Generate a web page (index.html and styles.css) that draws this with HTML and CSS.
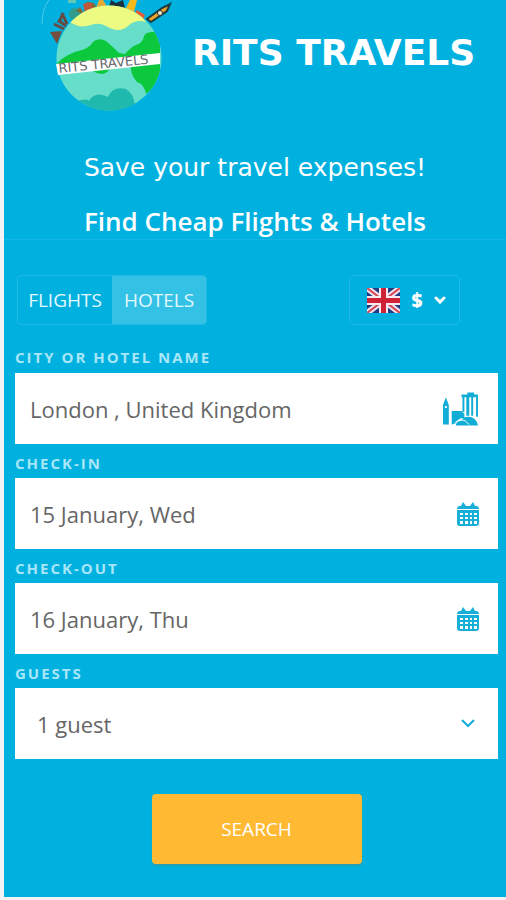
FILE: index.html
```html
<!DOCTYPE html>
<html lang="en">
<head>
<meta charset="utf-8">
<meta name="viewport" content="width=device-width, initial-scale=1">
<title>RITS TRAVELS</title>
<link rel="stylesheet" href="styles.css">
</head>
<body>
<main class="panel">
  <header class="brand">
    <svg class="logo" viewBox="40 0 136 114" role="img" aria-label="RITS TRAVELS">
      <defs><clipPath id="globe"><circle cx="109" cy="58" r="52.5"/></clipPath></defs>
      <path d="M42 24Q42 9 49 0" fill="none" stroke="#4fc6e3" stroke-width="1"/>
      <path d="M50 32l12-1-5 13z" fill="#76503f"/>
      <path d="M54 24l10 5M58 20l8 6M63 13l-4 10M62 13l5 11" stroke="#654c42" stroke-width="3"/>
      <path d="M68 0h8v3h-8z" fill="#62c8b4"/>
      <circle cx="75" cy="14" r="6" fill="#319b8c"/>
      <path d="M76 11l4-4 4 6 2-11 8 1 4 7-13 5z" fill="#806a35"/>
      <path d="M83 4l8-2 3 9-9 1z" fill="#bf563a"/>
      <path d="M96 8l3-8h4l5 8z" fill="#e7a934"/>
      <path d="M109 7l2-7 5 3 7-3 2 8z" fill="#17313f"/>
      <path d="M125 10l5-10h7l-3 12z" fill="#f5b91d"/>
      <path d="M134 15l3-5 8 5-3 7z" fill="#e85a34"/>
      <circle cx="109" cy="58" r="52.5" fill="#66dec9"/>
      <g clip-path="url(#globe)">
        <path d="M70 22Q80 29 91 25Q99 22 106 26Q119 34 128 26Q136 19 146 22L130 0H86z" fill="#edfb82"/>
        <path d="M56 64Q67 53 82 50Q89 48 93 42Q98 37 106 41Q112 46 119 53L125 54Q131 47 136 45Q143 43 144 36Q146 31 160 32V82L146 94Q144 84 137 82Q130 74 131 66L110 69Q103 78 93 71L60 69z" fill="#0bc83d"/>
        <path d="M88 112L90 99Q97 91 108 97Q112 86 126 89Q137 96 134 112z" fill="#20b9ad"/>
        <path d="M72 102Q90 97 90 102Q112 97 135 103V112H78z" fill="#20b9ad"/>
      </g>
      <path d="M56 64L160 53V64L58 75z" fill="#fff"/>
      <text class="logo-text" x="59" y="73" transform="rotate(-6 59 73)">RITS TRAVELS</text>
      <path d="M147 19L162 8L170 4L167 11L151 22z" fill="#f2a32d" stroke="#1b3b3f" stroke-width="2"/>
      <circle cx="160" cy="13" r="2.5" fill="#f3eacb" stroke="#17313f"/>
    </svg>
    <h1 class="title">RITS TRAVELS</h1>
  </header>
  <div class="intro">
    <p class="tagline">Save your travel expenses!</p>
    <h2 class="heading">Find Cheap Flights &amp; Hotels</h2>
  </div>
  <form class="search">
    <div class="toolbar">
      <div class="tabs">
        <button class="tab" type="button">FLIGHTS</button>
        <button class="tab tab-active" type="button">HOTELS</button>
      </div>
      <button class="currency" type="button" aria-label="Currency">
        <svg class="flag" viewBox="0 0 33 25">
          <path d="M0 0h33v25H0z" fill="#223b83"/>
          <path d="M0 0l33 25M33 0L0 25" stroke="#f1e3eb" stroke-width="6"/>
          <path d="M0 0l33 25M33 0L0 25" stroke="#d64355" stroke-width="2"/>
          <path d="M16.500 0v25M0 12.500h33" stroke="#f7e9ed" stroke-width="9"/>
          <path d="M16.500 0v25M0 12.500h33" stroke="#d02237" stroke-width="5"/>
        </svg>
        <span>$</span>
        <svg class="caret" viewBox="0 0 12 8"><path d="M2 2l4 4 4-4" fill="none" stroke="#fff" stroke-width="3" stroke-linecap="round"/></svg>
      </button>
    </div>

    <label class="label" for="city">CITY OR HOTEL NAME</label>
    <div class="field">
      <input class="control" id="city" type="text" value="London , United Kingdom">
      <svg class="icon icon-city" viewBox="0 0 38 34">
        <g fill="#12add6">
          <path d="M1 33V13l3-8 3 8v20zM10 33V19h10l3 3v4l-5 1-4 5z"/>
          <path d="M20 5V2h6V0h7v2h4v3z"/>
          <path d="M21 4h2v16h-2zM25 4h3v20h-3zM30 4h2v20h-2zM35 4h2v21h-2z"/>
          <path d="M14 34q1-5 6-5 1-4 7-4 8 0 10 9z"/>
        </g>
        <path d="M13 32q2-4 7-4 4 0 8 5" fill="none" stroke="#fff"/>
        <path d="M3 14h2v2H3z" fill="#fff"/>
      </svg>
    </div>

    <label class="label" for="checkin">CHECK-IN</label>
    <div class="field">
      <input class="control" id="checkin" type="text" value="15 January, Wed">
      <svg class="icon icon-calendar" viewBox="0 0 22 26">
        <path d="M0 8q0-3 3-3h1l2-4 3 4h4l3-4 2 4h1q3 0 3 3zM0 9h22v13q0 3-3 3H3q-3 0-3-3z" fill="#17aed7"/>
        <path d="M3 12h3v2H3zm5 0h3v2H8zm5 0h2v2h-2zm4 0h3v2h-3zM3 16h3v2H3zm5 0h3v2H8zm5 0h2v2h-2zm4 0h3v2h-3zM3 20h3v3H3zm5 0h3v3H8zm5 0h2v3h-2zm4 0h3v3h-3z" fill="#fff"/>
      </svg>
    </div>

    <label class="label" for="checkout">CHECK-OUT</label>
    <div class="field">
      <input class="control" id="checkout" type="text" value="16 January, Thu">
      <svg class="icon icon-calendar" viewBox="0 0 22 26">
        <path d="M0 8q0-3 3-3h1l2-4 3 4h4l3-4 2 4h1q3 0 3 3zM0 9h22v13q0 3-3 3H3q-3 0-3-3z" fill="#17aed7"/>
        <path d="M3 12h3v2H3zm5 0h3v2H8zm5 0h2v2h-2zm4 0h3v2h-3zM3 16h3v2H3zm5 0h3v2H8zm5 0h2v2h-2zm4 0h3v2h-3zM3 20h3v3H3zm5 0h3v3H8zm5 0h2v3h-2zm4 0h3v3h-3z" fill="#fff"/>
      </svg>
    </div>

    <label class="label" for="guests">GUESTS</label>
    <div class="field field-select">
      <select class="control" id="guests"><option>1 guest</option></select>
      <svg class="icon icon-chevron" viewBox="0 0 14 10"><path d="M1 1l6 6 6-6" fill="none" stroke="#14add7" stroke-width="2"/></svg>
    </div>

    <button class="submit" type="submit">SEARCH</button>
  </form>
</main>
</body>
</html>
```
FILE: styles.css
```css
* {
  box-sizing: border-box;
}

body {
  margin: 0;
  background: #f3f3f5;
  color: #fff;
  font-family: "Open Sans", sans-serif;
}

button,
input,
select {
  font: inherit;
}

.panel {
  margin: 0 0 3px 4px;
  padding-bottom: 33px;
  background: #00b1e0;
}

.brand {
  display: flex;
  align-items: flex-start;
  gap: 16px;
  padding-left: 36px;
}

.logo {
  flex: none;
  width: 136px;
  height: 114px;
}

.logo-text {
  fill: #65676d;
  font: 13px "DejaVu Sans", sans-serif;
}

.title {
  margin: 33px 0 0;
  font: bold 36px/40px "DejaVu Sans", sans-serif;
  white-space: nowrap;
}

.intro {
  padding-top: 36px;
  border-bottom: 1px solid #14b6e2;
  text-align: center;
}

.tagline {
  margin: 0;
  font: 25px/36px "DejaVu Sans", sans-serif;
}

.heading {
  margin: 17px 0 0;
  font-size: 26px;
  font-weight: 600;
  line-height: 36px;
}

.search {
  display: flex;
  flex-direction: column;
  padding: 35px 8px 0 11px;
}

.toolbar {
  display: flex;
  justify-content: space-between;
  padding: 0 38px 0 2px;
}

.tabs {
  display: flex;
  height: 50px;
  border: 1px solid #20b9e3;
  border-radius: 4px;
  overflow: hidden;
}

.tab {
  width: 94px;
  padding: 0;
  border: 0;
  background: transparent;
  color: #e4f8ff;
  font-size: 19px;
}

.tab-active {
  background: #33c1e6;
}

.currency {
  display: flex;
  align-items: center;
  justify-content: center;
  gap: 12px;
  width: 111px;
  height: 50px;
  padding: 0 0 0 4px;
  border: 1px solid #20b9e3;
  border-radius: 5px;
  background: transparent;
  color: #fff;
  font-size: 19px;
  font-weight: 800;
}

.flag {
  width: 33px;
  height: 25px;
}

.caret {
  width: 12px;
  height: 8px;
}

.label {
  height: 34px;
  padding-top: 9px;
  color: #a9e6f8;
  font-size: 15px;
  font-weight: 700;
  line-height: 20px;
  letter-spacing: 2px;
}

.toolbar + .label {
  height: 48px;
  padding-top: 22px;
}

.field {
  display: grid;
  grid-template-columns: 1fr auto;
  align-items: center;
  height: 71px;
  padding-right: 19px;
  background: #fff;
}

.field-select {
  padding-right: 23px;
}

.control {
  width: 100%;
  min-width: 0;
  height: 71px;
  padding: 0 0 0 15px;
  border: 0;
  outline: 0;
  background: transparent;
  color: #666;
  font-size: 22px;
}

.field-select .control {
  padding-left: 22px;
  appearance: none;
}

.icon-city {
  width: 37px;
  height: 34px;
}

.icon-calendar {
  width: 22px;
  height: 26px;
}

.icon-chevron {
  width: 14px;
  height: 10px;
}

.submit {
  align-self: center;
  width: 210px;
  height: 70px;
  margin-top: 35px;
  border: 0;
  border-radius: 4px;
  background: #ffb933;
  box-shadow: 0 2px 2px #2a9fae;
  color: #fff;
  font-size: 19px;
}
```
